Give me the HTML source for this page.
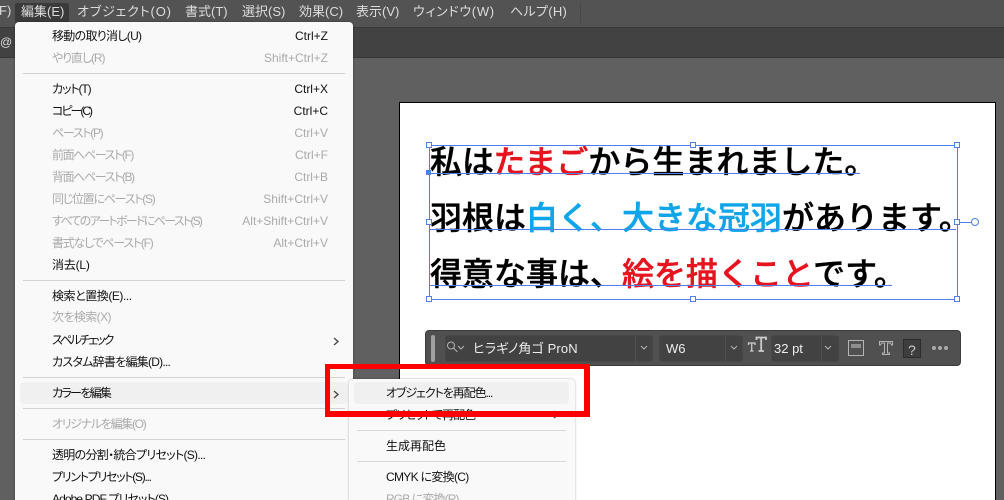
<!DOCTYPE html>
<html lang="ja"><head><meta charset="utf-8"><style>
html,body{margin:0;padding:0;width:1004px;height:500px;overflow:hidden;background:#606060}
*{box-sizing:border-box}
body{font-family:"Liberation Sans","Noto Sans CJK JP",sans-serif;font-size:12px;position:relative;font-feature-settings:"palt"}
.a{position:absolute}
.t{position:absolute;white-space:nowrap;line-height:16px;height:16px}
.m{color:#dcdcdc;font-size:13px;top:4px}
.i{left:52px;color:#111}
.s{right:676px;color:#111}
.d{color:#aaa}
.sep{position:absolute;height:1px;background:#d2d2d2;left:23px;width:322px}
.sub{position:absolute;height:1px;background:#d8d8d8;left:357px;width:209px}
.l{position:absolute;left:430px;font-size:32px;line-height:44px;height:44px;font-weight:500;-webkit-text-stroke:.5px currentColor;color:#000;white-space:nowrap;font-family:"Noto Sans CJK JP",sans-serif;font-feature-settings:normal}
.r{color:#e6141e}.b{color:#0ea5e9}
.h{position:absolute;width:6px;height:6px;background:#fff;border:1px solid #4f7fe8}
.bl{position:absolute;background:#4f7fe8}
.f{position:absolute;top:4px;height:27px;background:#424242;border:1px solid #484848;border-radius:3px}
.dv{position:absolute;top:4px;height:27px;width:1px;background:#505050}
</style></head><body>
<!-- top bars -->
<div class="a" style="left:0;top:0;width:1004px;height:28px;background:#535353;border-bottom:1px solid #3b3b3b"></div>
<div class="a" style="left:0;top:28px;width:1004px;height:30px;background:#424242;border-bottom:1px solid #383838"></div>
<div class="a" style="left:15px;top:3px;width:54px;height:20px;background:#3a3a3a;border-radius:2px"></div>
<div class="a" style="left:580px;top:3px;width:1px;height:20px;background:#484848"></div>
<div class="t m" style="left:-1px;top:3px">F)</div>
<div class="t m" style="left:21px">編集(E)</div>
<div class="t m" style="left:77px;letter-spacing:.85px">オブジェクト(O)</div>
<div class="t m" style="left:185px">書式(T)</div>
<div class="t m" style="left:242px">選択(S)</div>
<div class="t m" style="left:299px">効果(C)</div>
<div class="t m" style="left:356px">表示(V)</div>
<div class="t m" style="left:413px;letter-spacing:.7px">ウィンドウ(W)</div>
<div class="t m" style="left:510px;letter-spacing:.3px">ヘルプ(H)</div>
<div class="t" style="left:0;top:34px;color:#ddd">@ 8</div>

<!-- artboard -->
<div class="a" style="left:399px;top:102px;width:597px;height:398px;background:#fff;border:1px solid #000;border-bottom:0"></div>

<!-- text -->
<div class="l" style="top:138px">私は<span class="r">たまご</span>から生まれました。</div>
<div class="l" style="top:194px">羽根は<span class="b">白く、大きな冠羽</span>があります。</div>
<div class="l" style="top:250px">得意な事は、<span class="r">絵を描くこと</span>です。</div>

<!-- selection -->
<div class="bl" style="left:429px;top:145px;width:529px;height:1px"></div>
<div class="bl" style="left:429px;top:299px;width:529px;height:1px"></div>
<div class="bl" style="left:429px;top:145px;width:1px;height:154px"></div>
<div class="bl" style="left:957px;top:145px;width:1px;height:154px"></div>
<div class="bl" style="left:429px;top:173px;width:431px;height:1px"></div>
<div class="bl" style="left:429px;top:229px;width:527px;height:1px"></div>
<div class="bl" style="left:429px;top:285px;width:463px;height:1px"></div>
<div class="bl" style="left:960px;top:222px;width:12px;height:1px"></div>
<div class="h" style="left:426px;top:142px"></div>
<div class="h" style="left:690px;top:142px"></div>
<div class="h" style="left:954px;top:142px"></div>
<div class="h" style="left:426px;top:219px"></div>
<div class="h" style="left:954px;top:219px"></div>
<div class="h" style="left:426px;top:296px"></div>
<div class="h" style="left:690px;top:296px"></div>
<div class="h" style="left:954px;top:296px"></div>
<div class="a" style="left:426px;top:170px;width:5px;height:5px;background:#4f7fe8"></div>
<div class="a" style="left:971px;top:218px;width:8px;height:8px;border:1px solid #4f7fe8;border-radius:50%;background:#fff"></div>

<!-- font toolbar -->
<div class="a" style="left:425px;top:330px;width:536px;height:36px;background:#505050;border:1px solid #3c3c3c;border-radius:4px">
 <div class="a" style="left:5px;top:4px;width:4px;height:27px;background:#a0a0a0;border-radius:2px"></div>
 <div class="f" style="left:19px;width:208px"></div><div class="dv" style="left:209px"></div>
 <div class="f" style="left:233px;width:84px"></div><div class="dv" style="left:299px"></div>
 <div class="f" style="left:345px;width:68px"></div><div class="dv" style="left:395px"></div>
 <div class="t" style="left:47px;top:10px;color:#eee;font-size:13px;letter-spacing:.15px">ヒラギノ角ゴ ProN</div>
 <div class="t" style="left:240px;top:10px;color:#eee;font-size:13px">W6</div>
 <div class="t" style="left:348px;top:10px;color:#eee;font-size:13px">32 pt</div>
 <svg class="a" style="left:0;top:0" width="534" height="34" fill="none" stroke="#b4b4b4" stroke-width="1">
  <circle cx="25" cy="14.500" r="3.500"/><path d="M27.500 17l4 4"/><path d="M32 15l3 3 3-3"/>
  <path d="M215 15l3 3 3-3M305 15l3 3 3-3M399 15l3 3 3-3"/>
  <path d="M322.500 14v-2h6.500v2M325.700 12v8M324 20h3.500" stroke="#ccc" stroke-width="1.300"/>
  <path d="M330.500 9V6.500h9.500V9M335.200 6.500V20M332.500 20h5.500" stroke="#ccc" stroke-width="1.800"/>
  <rect x="422.500" y="9.500" width="15" height="15"/><path d="M425 14h10M425 16h10" stroke-width="1.200"/>
  <path d="M453.500 10.500h13v3.500h-1l-1-2h-3v10h2v1.500h-7V22h2V12h-3l-1 2h-1z"/>
  <rect x="477.500" y="8.500" width="17" height="18" fill="#3e3e3e" stroke="#2c2c2c"/>
 </svg>
 <div class="t" style="left:482px;top:11px;color:#ccc;font-size:14px">?</div>
 <svg class="a" style="left:505px;top:14px" width="20" height="6" fill="#aaa"><circle cx="3" cy="3" r="2"/><circle cx="9" cy="3" r="2"/><circle cx="15" cy="3" r="2"/></svg>
</div>

<!-- main menu -->
<div class="a" style="left:15px;top:22px;width:338px;height:490px;background:#f9f9f9;border-radius:4px;box-shadow:0 0 2px rgba(0,0,0,.35)"></div>
<div class="a" style="left:20px;top:382px;width:328px;height:22px;background:#f0f0f0;border-radius:4px"></div>
<div class="t i" style="top:28px;letter-spacing:-.7px">移動の取り消し(U)</div><div class="t s" style="top:28px">Ctrl+Z</div>
<div class="t i d" style="top:50px;letter-spacing:-1.1px">やり直し(R)</div><div class="t s d" style="top:50px">Shift+Ctrl+Z</div>
<div class="sep" style="top:73px"></div>
<div class="t i" style="top:81px;letter-spacing:-1.1px">カット(T)</div><div class="t s" style="top:81px">Ctrl+X</div>
<div class="t i" style="top:103px;letter-spacing:-2px">コピー(C)</div><div class="t s" style="top:103px">Ctrl+C</div>
<div class="t i d" style="top:125px;letter-spacing:-1.3px">ペースト(P)</div><div class="t s d" style="top:125px">Ctrl+V</div>
<div class="t i d" style="top:147px;letter-spacing:-1.4px">前面へペースト(F)</div><div class="t s d" style="top:147px">Ctrl+F</div>
<div class="t i d" style="top:169px;letter-spacing:-1.4px">背面へペースト(B)</div><div class="t s d" style="top:169px">Ctrl+B</div>
<div class="t i d" style="top:191px;letter-spacing:-1.25px">同じ位置にペースト(S)</div><div class="t s d" style="top:191px">Shift+Ctrl+V</div>
<div class="t i d" style="top:213px;letter-spacing:-1.7px">すべてのアートボードにペースト(S)</div><div class="t s d" style="top:213px">Alt+Shift+Ctrl+V</div>
<div class="t i d" style="top:235px;letter-spacing:-1.25px">書式なしでペースト(F)</div><div class="t s d" style="top:235px">Alt+Ctrl+V</div>
<div class="t i" style="top:257px;letter-spacing:-.2px">消去(L)</div>
<div class="sep" style="top:280px"></div>
<div class="t i" style="top:288px;letter-spacing:-.45px">検索と置換(E)...</div>
<div class="t i d" style="top:309px;letter-spacing:-.6px">次を検索(X)</div>
<div class="t i" style="top:332px;letter-spacing:-2px">スペルチェック</div>
<div class="t i" style="top:354px;letter-spacing:-.75px">カスタム辞書を編集(D)...</div>
<div class="sep" style="top:377px"></div>
<div class="t i" style="top:385px;letter-spacing:-1.7px">カラーを編集</div>
<div class="sep" style="top:408px"></div>
<div class="t i d" style="top:416px;letter-spacing:-1.3px">オリジナルを編集(O)</div>
<div class="sep" style="top:439px"></div>
<div class="t i" style="top:447px;letter-spacing:-.7px">透明の分割・統合プリセット(S)...</div>
<div class="t i" style="top:469px;letter-spacing:-1.27px">プリントプリセット(S)...</div>
<div class="t i" style="top:491px;letter-spacing:-.9px">Adobe PDF プリセット(S)...</div>
<svg class="a" style="left:333px;top:337px" width="8" height="62" fill="none" stroke="#444" stroke-width="1.300"><path d="M1 1l4 3.500-4 3.500"/><path d="M1 54l4 3.500-4 3.500"/></svg>

<!-- submenu -->
<div class="a" style="left:349px;top:379px;width:226px;height:130px;background:#f9f9f9;border-radius:4px;box-shadow:0 0 2px rgba(0,0,0,.3)"></div>
<div class="a" style="left:354px;top:382px;width:215px;height:22px;background:#f0f0f0;border-radius:4px"></div>
<div class="t" style="left:386px;top:385px;color:#111;letter-spacing:-1.07px">オブジェクトを再配色...</div>
<div class="t" style="left:386px;top:407px;color:#111;letter-spacing:-1px">プリセットで再配色</div>
<svg class="a" style="left:553px;top:410px" width="8" height="10" fill="none" stroke="#444" stroke-width="1.300"><path d="M1 1l4 3.500-4 3.500"/></svg>
<div class="sub" style="top:430px"></div>
<div class="t" style="left:386px;top:438px;color:#111">生成再配色</div>
<div class="sub" style="top:461px"></div>
<div class="t" style="left:386px;top:469px;color:#111;letter-spacing:-.7px">CMYK に変換(C)</div>
<div class="t d" style="left:386px;top:491px;letter-spacing:-.9px">RGB に変換(R)</div>

<!-- red box -->
<div class="a" style="left:325px;top:364px;width:265px;height:53px;border:solid #fe0000;border-width:5px 6px 6px 5px"></div>
</body></html>
